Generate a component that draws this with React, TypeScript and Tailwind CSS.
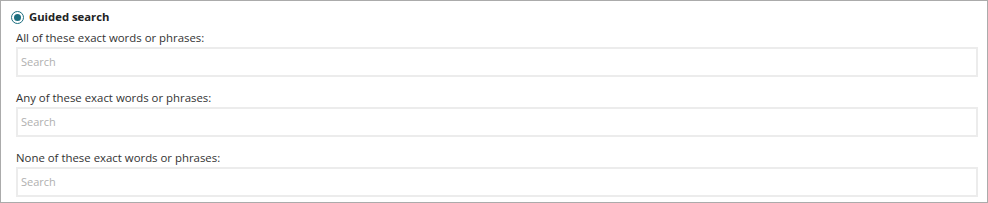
import React from 'react'

const FIELDS = [
  'All of these exact words or phrases:',
  'Any of these exact words or phrases:',
  'None of these exact words or phrases:',
]

export default function App() {
  return (
    <div
      className="w-[988px] h-[203px] border border-[#ababab] bg-white px-[15px] pt-[8px] text-[#333]"
      style={{ fontFamily: '"Open Sans", "Liberation Sans", sans-serif' }}
    >
      {/* Radio header */}
      <label className="flex items-center gap-[5px] -ml-[5px] h-[16px]">
        <span className="w-[13px] h-[13px] rounded-full border-[1.5px] border-[#1d6f80] flex items-center justify-center shrink-0">
          <span className="w-[7px] h-[7px] rounded-full bg-[#1d6f80]" />
        </span>
        <span className="text-[11.3px] font-bold text-[#222] leading-none">Guided search</span>
      </label>

      <div className="flex flex-col mt-[4px]">
        {FIELDS.map((label, i) => (
          <div key={i} className={i > 0 ? 'mt-[12px]' : ''}>
            <div className="text-[11.4px] leading-[17px] text-[#333]">{label}</div>
            <div className="mt-[1px] h-[30px] w-[962px] border-2 border-[#ececec] bg-white flex items-center px-[3px]">
              <input
                placeholder="Search"
                className="w-full bg-transparent outline-none text-[11px] placeholder:text-[#b0b0b0]"
              />
            </div>
          </div>
        ))}
      </div>
    </div>
  )
}
